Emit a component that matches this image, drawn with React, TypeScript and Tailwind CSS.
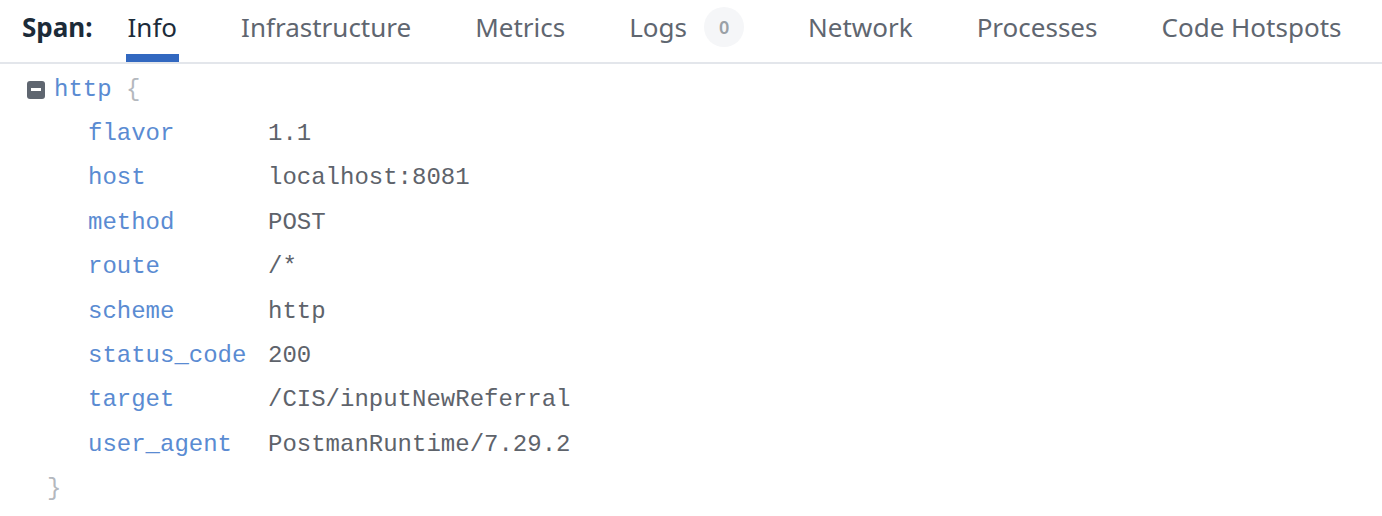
import React from "react";

const tabs = [
  { label: "Info", active: true },
  { label: "Infrastructure" },
  { label: "Metrics" },
  { label: "Logs", badge: "0" },
  { label: "Network" },
  { label: "Processes" },
  { label: "Code Hotspots" },
];

const rows: [string, string][] = [
  ["flavor", "1.1"],
  ["host", "localhost:8081"],
  ["method", "POST"],
  ["route", "/*"],
  ["scheme", "http"],
  ["status_code", "200"],
  ["target", "/CIS/inputNewReferral"],
  ["user_agent", "PostmanRuntime/7.29.2"],
];

export default function App() {
  return (
    <div className="w-[1382px] h-[516px] bg-white overflow-hidden">
      {/* Tabs */}
      <div
        className="flex items-stretch h-[64px] border-b-2 border-[#e3e6eb] pl-[22px] text-[26px]"
        style={{ fontFamily: '"Noto Sans", "Open Sans", sans-serif' }}
      >
        <div className="flex items-center pb-[8px] font-bold text-[#1c2b39] mr-[33px]">
          Span:
        </div>
        <div className="flex items-stretch gap-[60px]">
          {tabs.map((t) => (
            <div
              key={t.label}
              className={`flex items-center gap-[17px] px-[2px] border-b-[8px] ${
                t.active ? "border-[#3268c0] text-[#1c2b39]" : "border-transparent text-[#5f6670]"
              }`}
            >
              <span>{t.label}</span>
              {t.badge && (
                <span className="w-[40px] h-[40px] rounded-full bg-[#f5f6f8] flex items-center justify-center text-[18px] font-semibold text-[#9aa0a6]">
                  {t.badge}
                </span>
              )}
            </div>
          ))}
        </div>
      </div>

      {/* Body */}
      <div
        className="pt-[3.5px] text-[24px] leading-[44.4px]"
        style={{ fontFamily: '"Liberation Mono", "DejaVu Sans Mono", monospace' }}
      >
        <div className="flex items-center pl-[27px]">
          <span className="w-[18px] h-[18px] rounded-[3px] bg-[#5f6670] flex items-center justify-center mr-[9px]">
            <span className="w-[10px] h-[3px] bg-white" />
          </span>
          <span className="text-[#5a8bd2]">http</span>
          <span className="text-[#b4b8be] ml-[14.4px]">{"{"}</span>
        </div>
        <div className="grid grid-cols-[180px_1fr] pl-[88px]">
          {rows.map(([k, v]) => (
            <React.Fragment key={k}>
              <div className="text-[#5a8bd2] whitespace-nowrap">{k}</div>
              <div className="text-[#5e636b] whitespace-nowrap">{v}</div>
            </React.Fragment>
          ))}
        </div>
        <div className="pl-[47px] text-[#b4b8be]">{"}"}</div>
      </div>
    </div>
  );
}
